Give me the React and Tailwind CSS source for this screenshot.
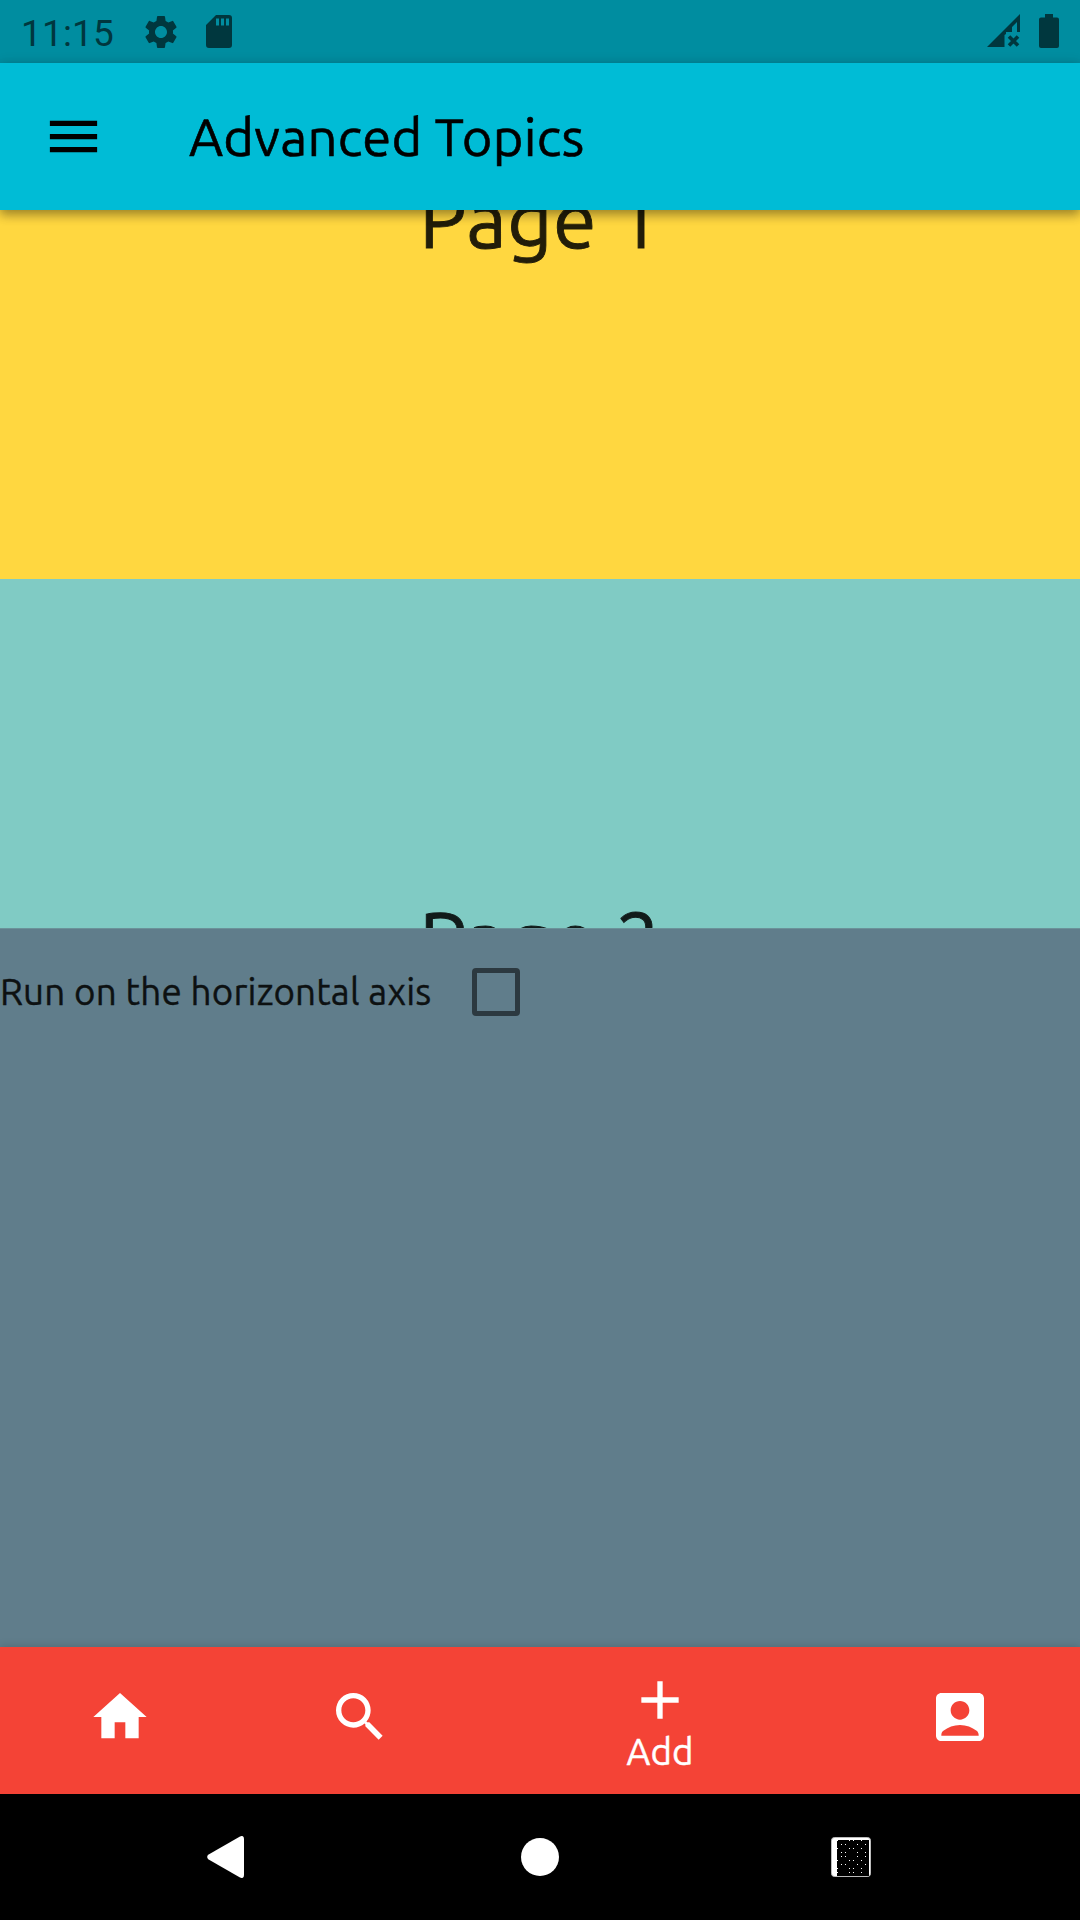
import React from "react";
import {
  MdMenu,
  MdHome,
  MdSearch,
  MdAdd,
  MdAccountBox,
  MdSettings,
} from "react-icons/md";

function StatusBar() {
  return (
    <div className="flex h-[63px] shrink-0 items-center bg-[#008da0] text-[#00373e]">
      <span className="ml-[21px] mt-[3px] w-[96px] whitespace-nowrap font-['Roboto',sans-serif] text-[37px] leading-none tracking-[0.15px]">
        11:15
      </span>
      <MdSettings className="ml-[24px] size-[40px]" />
      <svg className="ml-[25px] h-[33px] w-[26px]" viewBox="0 0 26 33" fill="currentColor">
        <path
          fillRule="evenodd"
          d="M10 0H23Q26 0 26 3V30Q26 33 23 33H3Q0 33 0 30V10ZM10 3.500V10.500H13V3.500ZM15 3.500V10.500H18V3.500ZM20 3.500V10.500H23V3.500Z"
        />
      </svg>
      <div className="mb-px ml-auto mr-[21px] flex items-center gap-[19px]">
        <svg className="h-[34px] w-[33px]" viewBox="0 0 33 34" fill="currentColor">
          <path d="M0 33L33 0V18H30V8L25 13V18H19V20L17.500 21V33Z" />
          <path d="M22 22.500L31 31.500M31 22.500L22 31.500" stroke="currentColor" strokeWidth="3.6" />
        </svg>
        <svg className="h-[34px] w-[20px]" viewBox="0 0 20 34" fill="currentColor">
          <path d="M6 0H14V3.500H18Q20 3.500 20 5.500V32Q20 34 18 34H2Q0 34 0 32V5.500Q0 3.500 2 3.500H6Z" />
        </svg>
      </div>
    </div>
  );
}

function AppBar() {
  return (
    <header className="relative z-10 flex h-[147px] shrink-0 items-center bg-[#00bcd6] text-black shadow-[0_5px_10px_rgba(0,0,0,0.3),0_2px_13px_rgba(0,0,0,0.15)]">
      <MdMenu className="ml-[42px] size-[63px]" />
      <h1 className="ml-[84px] whitespace-nowrap text-[52.5px] leading-[60px] tracking-[0.28px] [-webkit-text-stroke:0.6px]">
        Advanced Topics
      </h1>
    </header>
  );
}

function Pager() {
  return (
    <main className="flex h-[718px] shrink-0 flex-col overflow-hidden text-center text-[78.75px] leading-[92px] tracking-[0.6px] text-[#221d09] [-webkit-text-stroke:0.9px]">
      <section className="h-[369px] shrink-0 bg-[#ffd740]">
        <p className="-mt-[37px]">Page 1</p>
      </section>
      <section className="h-[719px] shrink-0 bg-[#80cbc4] pt-[314px] text-[#111b1a]">
        <p>Page 2</p>
      </section>
    </main>
  );
}

function Options() {
  return (
    <section className="h-[719px] shrink-0 border-t border-[#6b9299] bg-[#607d8b]">
      <label className="flex h-[126px] items-center text-[36.75px] tracking-[0.2px] text-[#0d1112] [-webkit-text-stroke:0.4px]">
        <span className="w-[432px] whitespace-nowrap">Run on the horizontal axis</span>
        <span className="ml-[40px] size-[48px] rounded-[4px] border-[5px] border-black/54" />
      </label>
    </section>
  );
}

function BottomBar() {
  return (
    <nav className="relative z-10 flex h-[147px] shrink-0 bg-[#f44336] text-white shadow-[0_-1px_8px_rgba(0,0,0,0.15)]">
      <div className="flex w-[240px] justify-center pt-[38px]">
        <MdHome className="size-[64px]" />
      </div>
      <div className="flex w-[240px] justify-center pt-[38px]">
        <MdSearch className="size-[64px]" />
      </div>
      <div className="flex w-[360px] flex-col items-center pt-[21px]">
        <MdAdd className="size-[64px] shrink-0" />
        <span className="-mt-px text-[36.75px] leading-[42px] [-webkit-text-stroke:0.4px]">Add</span>
      </div>
      <div className="flex w-[240px] justify-center pt-[38px]">
        <MdAccountBox className="size-[64px]" />
      </div>
    </nav>
  );
}

const DOTS = [
  [6, 3], [18, 3], [22, 3], [30, 3],
  [10, 7], [14, 7], [26, 7], [34, 7],
  [6, 11], [18, 11], [22, 11], [30, 11],
  [10, 15], [14, 15], [26, 15], [34, 15],
  [10, 19], [14, 19], [26, 19], [34, 19],
  [6, 23], [18, 23], [22, 23], [30, 23],
  [10, 27], [14, 27], [26, 27], [34, 27],
  [6, 31], [18, 31], [22, 31], [30, 31],
  [6, 35], [18, 35], [22, 35], [30, 35],
];

function SystemNav() {
  return (
    <div className="flex h-[126px] shrink-0 items-center bg-black">
      <svg className="ml-[207px] h-[42px] w-[37px]" viewBox="0 0 37 42" fill="white">
        <path d="M33 .5Q37-1.300 37 3V39Q37 43.300 33 41.500L1.200 23.200Q-.8 21 1.200 18.800Z" />
      </svg>
      <span className="ml-[277px] size-[38px] rounded-full bg-white" />
      <svg className="ml-[272px] size-[40px]" viewBox="0 0 40 40">
        <rect x=".5" y=".5" width="39" height="39" rx="3" fill="white" stroke="#bbb" />
        <path d="M6 3H38V39H6Z" fill="black" />
        {DOTS.map(([x, y]) => (
          <rect key={`${x}-${y}`} x={x} y={y} width="1" height="1" fill="white" />
        ))}
      </svg>
    </div>
  );
}

export default function App() {
  return (
    <div className="flex h-[1920px] w-[1080px] flex-col overflow-hidden font-['Ubuntu','Noto_Sans',sans-serif]">
      <StatusBar />
      <AppBar />
      <Pager />
      <Options />
      <BottomBar />
      <SystemNav />
    </div>
  );
}
